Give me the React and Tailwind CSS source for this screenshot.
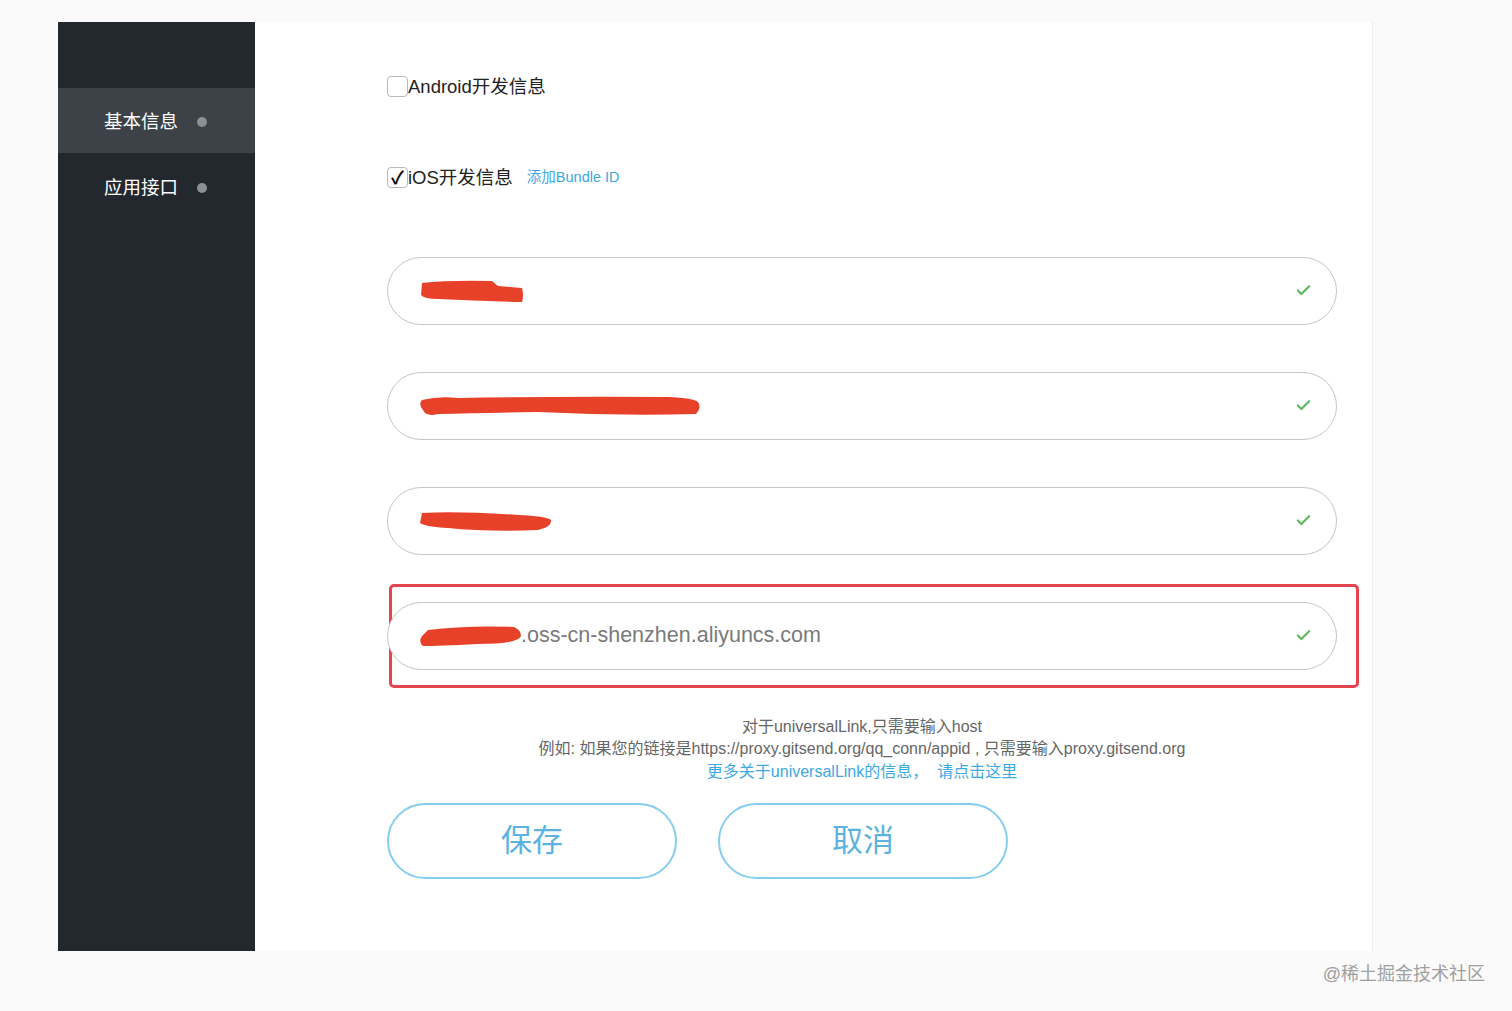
import { Check } from 'lucide-react'

const font = { fontFamily: '"Liberation Sans", "Noto Sans CJK SC", sans-serif' }

function Redact({ w, d }) {
  return (
    <svg width={w} height="28" viewBox={`0 0 ${w} 28`} className="absolute left-0 top-1/2 -translate-y-1/2">
      <path d={d} fill="#e8412a" />
    </svg>
  )
}

function Field({ children }) {
  return (
    <div className="relative flex h-[68px] w-[950px] items-center rounded-full border border-[#c6c6c6] bg-white pl-[30px] pr-[24px]">
      <div className="flex-1 text-[21.5px] text-[#7a7a7a]">{children}</div>
      <Check size={17} strokeWidth={3} className="text-[#5cb85c]" />
    </div>
  )
}

export default function App() {
  return (
    <div className="min-h-screen bg-[#fafafa] pl-[58px] pt-[22px]" style={font}>
      <div className="flex">
        <aside className="h-[929px] w-[197px] bg-[#23272e] pt-[66px]">
          <div className="flex h-[65px] items-center bg-[#3d4248] pl-[46px] pt-[2px] text-[18.5px] text-white">
            <span className="w-[93px]">基本信息</span>
            <span className="h-[10px] w-[10px] rounded-full bg-[#8a9096]" />
          </div>
          <div className="flex h-[67px] items-center pl-[46px] pt-[2px] text-[18.5px] text-white">
            <span className="w-[93px]">应用接口</span>
            <span className="h-[10px] w-[10px] rounded-full bg-[#8a9096]" />
          </div>
        </aside>

        <main className="h-[929px] w-[1118px] border-r border-[#eeeeee] bg-white pl-[132px] pt-[51px]">
          <label className="flex items-center text-[18.5px] text-[#222]">
            <span className="h-[21px] w-[21px] rounded-[4px] border border-[#b8b8b8] bg-white" />
            <span>Android开发信息</span>
          </label>

          <div className="mt-[63px] flex items-center">
            <span className="flex h-[21px] w-[21px] items-center justify-center rounded-[4px] border border-[#b8b8b8] bg-white text-[18px] font-bold leading-none text-[#111]">✓</span>
            <span className="text-[18.5px] text-[#222]">iOS开发信息</span>
            <a className="ml-[14px] text-[14.5px] text-[#3ea8e2]">添加Bundle ID</a>
          </div>

          <div className="mt-[65px] flex flex-col gap-[47px]">
            <Field>
              <span className="relative block h-[28px]">
                <Redact w={106} d="M4 6 Q30 3 74 4 L80 9 Q95 10 104 11 Q106 18 104 25 Q60 24 20 22 Q6 22 3 18 Z" />
              </span>
            </Field>
            <Field>
              <span className="relative block h-[28px]">
                <Redact w={284} d="M4 8 Q20 4 40 6 Q150 4 250 5 Q276 6 280 10 Q284 16 278 22 Q200 24 120 20 Q60 21 20 22 Q8 25 5 18 Q0 12 4 8 Z" />
              </span>
            </Field>
            <Field>
              <span className="relative block h-[28px]">
                <Redact w={136} d="M4 6 Q40 4 100 8 Q128 9 133 13 Q134 20 120 23 Q70 25 30 21 Q8 20 2 16 Z" />
              </span>
            </Field>
            <div className="relative">
              <div className="pointer-events-none absolute -top-[18px] left-[2px] h-[104px] w-[970px] rounded-[5px] border-[3px] border-[#e3464f]" />
              <Field>
                <span className="relative flex h-[28px] items-center pl-[103px]">
                  <Redact w={104} d="M10 8 Q50 3 96 5 Q103 8 103 14 Q100 22 60 22 Q20 24 5 24 Q0 20 4 14 Z" />
                  .oss-cn-shenzhen.aliyuncs.com
                </span>
              </Field>
            </div>
          </div>

          <div className="mt-[46px] w-[950px] text-center text-[16px] leading-[22.5px] text-[#666]">
            <p>对于universalLink,只需要输入host</p>
            <p>例如: 如果您的链接是https://proxy.gitsend.org/qq_conn/appid , 只需要输入proxy.gitsend.org</p>
            <p className="text-[#3ea8e2]">更多关于universalLink的信息， &nbsp;请点击这里</p>
          </div>

          <div className="mt-[20px] flex gap-[41px]">
            <button className="h-[76px] w-[290px] rounded-full border-2 border-[#86cdee] text-[31px] text-[#5cb3e0]">保存</button>
            <button className="h-[76px] w-[290px] rounded-full border-2 border-[#86cdee] text-[31px] text-[#5cb3e0]">取消</button>
          </div>
        </main>
      </div>

      <div className="flex justify-end pr-[27px] pt-[10px] text-[18px] text-[#a0a0a0]">@稀土掘金技术社区</div>
    </div>
  )
}
